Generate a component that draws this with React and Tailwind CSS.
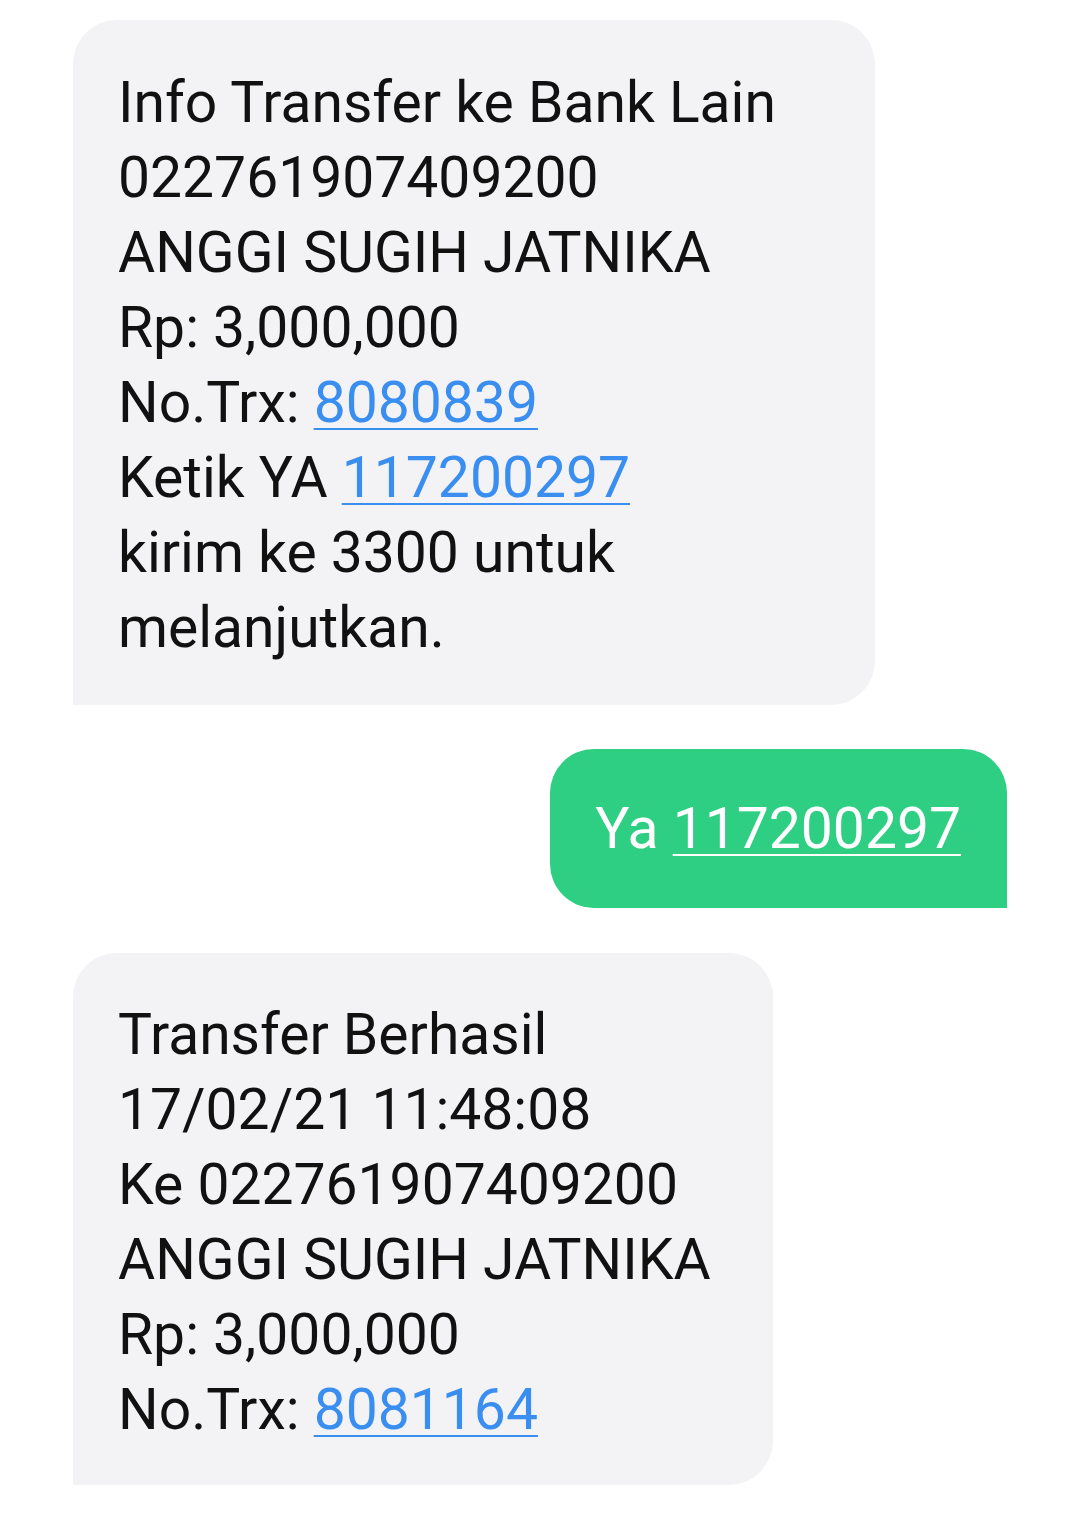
import React from 'react';

const font = { fontFamily: 'Roboto, "Noto Sans", sans-serif' };

function Link({ children, light }) {
  return (
    <span
      className={`underline decoration-2 underline-offset-[6px] ${
        light ? 'text-white' : 'text-[#3a8ef0]'
      }`}
    >
      {children}
    </span>
  );
}

function Incoming({ className, children }) {
  return (
    <div
      className={`${className} bg-[#f3f3f5] rounded-tl-[44px] rounded-tr-[44px] rounded-br-[44px] rounded-bl-none px-[45px] text-[57px] leading-[75px] text-[#111]`}
    >
      {children}
    </div>
  );
}

export default function App() {
  return (
    <div className="min-h-[1513px] bg-white pt-[20px] pl-[73px] pr-[73px]" style={font}>
      <div className="flex flex-col">
        <Incoming className="w-[802px] pt-[45px] pb-[40px]">
          <div>Info Transfer ke Bank Lain</div>
          <div>022761907409200</div>
          <div>ANGGI SUGIH JATNIKA</div>
          <div>Rp: 3,000,000</div>
          <div>
            No.Trx: <Link>8080839</Link>
          </div>
          <div>
            Ketik YA <Link>117200297</Link>
          </div>
          <div>kirim ke 3300 untuk</div>
          <div>melanjutkan.</div>
        </Incoming>

        <div className="flex justify-end mt-[44px]">
          <div className="bg-[#2ecf82] rounded-tl-[44px] rounded-tr-[44px] rounded-bl-[44px] rounded-br-none pl-[45px] pr-[46px] py-[42px] text-[57px] leading-[75px] text-white">
            Ya <Link light>117200297</Link>
          </div>
        </div>

        <Incoming className="w-[700px] mt-[45px] pt-[44px] pb-[38px]">
          <div>Transfer Berhasil</div>
          <div>17/02/21 11:48:08</div>
          <div>Ke 022761907409200</div>
          <div>ANGGI SUGIH JATNIKA</div>
          <div>Rp: 3,000,000</div>
          <div>
            No.Trx: <Link>8081164</Link>
          </div>
        </Incoming>
      </div>
    </div>
  );
}
